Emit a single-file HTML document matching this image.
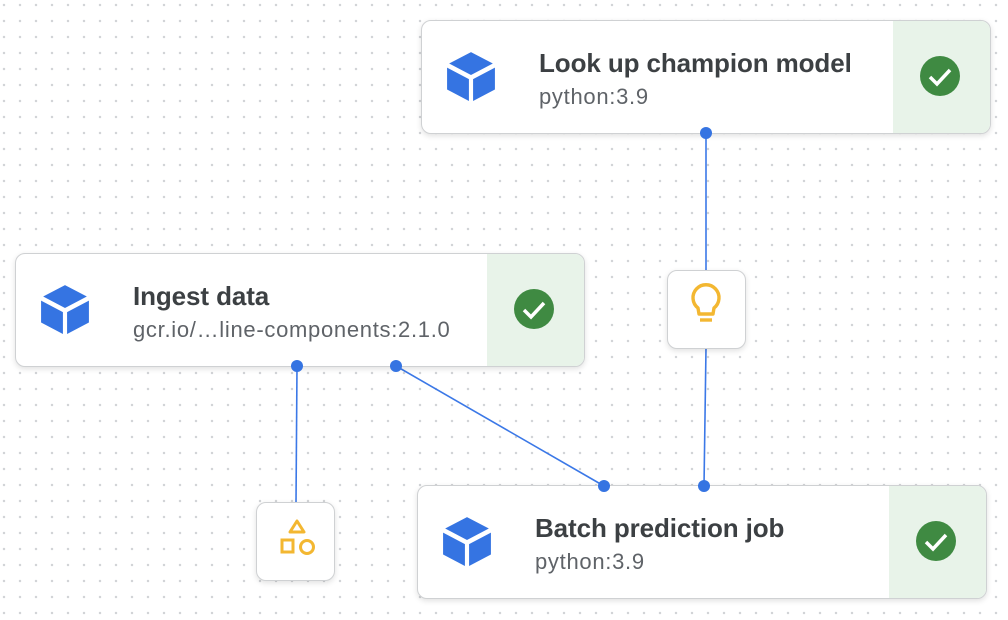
<!DOCTYPE html>
<html><head><style>
body{margin:0;width:1008px;height:620px;overflow:hidden;background:#fff;font-family:"Liberation Sans",Roboto,sans-serif;
background-image:radial-gradient(circle,#d2d4d7 1.1px,transparent 1.4px);background-size:16px 16px;background-position:-4px -3px;position:relative}
.card{position:absolute;width:570px;height:114px;background:#fff;border:1.5px solid #cfd1d3;border-radius:10px;box-shadow:0 2px 6px rgba(0,0,0,.12);overflow:hidden;box-sizing:border-box}
.card .g{position:absolute;right:0;top:0;bottom:0;width:97px;background:#e8f3e9}
.card .g svg{position:absolute;left:27px;top:35px}
.card .cube{position:absolute;left:24px;top:29px}
.card .t{position:absolute;left:117px;top:27px;font-size:26px;font-weight:bold;color:#3c4043;letter-spacing:-.1px}
.card .s{position:absolute;left:117px;top:63px;font-size:22px;color:#5f6368;letter-spacing:.7px}
.box{position:absolute;width:79px;height:79px;background:#fff;border:1.5px solid #cfd1d3;border-radius:10px;box-shadow:0 2px 6px rgba(0,0,0,.12);box-sizing:border-box}
svg.lines{position:absolute;left:0;top:0}
</style></head><body>
<svg class="lines" width="1008" height="620">
<g stroke="#3b78e7" stroke-width="1.6" fill="none">
<line x1="706" y1="133" x2="706" y2="272"/><line x1="706" y1="348" x2="704" y2="486"/>
<line x1="297" y1="366" x2="296" y2="503"/><line x1="396" y1="366" x2="604" y2="486"/>
</g></svg>
<div class="card" style="left:421px;top:20px;">
<svg class="cube" width="50" height="52" viewBox="0 0 48 50"><path d="M24 2 L45 13 L24 24 L3 13Z M1 17 L22 28 L22 49 L1 38Z M26 28 L47 17 L47 38 L26 49Z" fill="#3574e2"/></svg>
<div class="t">Look up champion model</div><div class="s">python:3.9</div>
<div class="g"><svg width="40" height="40"><circle cx="20" cy="20" r="20" fill="#3f8a42"/><path d="M10 21 L17 28 L30 14" stroke="#fff" stroke-width="3.5" fill="none"/></svg></div></div>
<div class="card" style="left:15px;top:253px;">
<svg class="cube" width="50" height="52" viewBox="0 0 48 50"><path d="M24 2 L45 13 L24 24 L3 13Z M1 17 L22 28 L22 49 L1 38Z M26 28 L47 17 L47 38 L26 49Z" fill="#3574e2"/></svg>
<div class="t">Ingest data</div><div class="s">gcr.io/…line-components:2.1.0</div>
<div class="g"><svg width="40" height="40"><circle cx="20" cy="20" r="20" fill="#3f8a42"/><path d="M10 21 L17 28 L30 14" stroke="#fff" stroke-width="3.5" fill="none"/></svg></div></div>
<div class="card" style="left:417px;top:485px;">
<svg class="cube" width="50" height="52" viewBox="0 0 48 50"><path d="M24 2 L45 13 L24 24 L3 13Z M1 17 L22 28 L22 49 L1 38Z M26 28 L47 17 L47 38 L26 49Z" fill="#3574e2"/></svg>
<div class="t">Batch prediction job</div><div class="s">python:3.9</div>
<div class="g"><svg width="40" height="40"><circle cx="20" cy="20" r="20" fill="#3f8a42"/><path d="M10 21 L17 28 L30 14" stroke="#fff" stroke-width="3.5" fill="none"/></svg></div></div>
<div class="box" style="left:667px;top:270px;"><svg width="79" height="79" style="position:absolute;left:-1px;top:-1px"><path d="M31 38 A13 13 0 1 1 47 38 L46 44 L32 44Z" fill="none" stroke="#f3b731" stroke-width="3.4" stroke-linejoin="round"/><line x1="33" y1="50" x2="45" y2="50" stroke="#f3b731" stroke-width="3.4"/></svg></div>
<div class="box" style="left:256px;top:502px;"><svg width="79" height="79" style="position:absolute;left:-1px;top:-1px"><path d="M41 19 L48 30 L34 30Z" fill="none" stroke="#f3b731" stroke-width="3" stroke-linejoin="round"/><rect x="26" y="38" width="11" height="12" fill="none" stroke="#f3b731" stroke-width="3"/><circle cx="51" cy="45" r="6.5" fill="none" stroke="#f3b731" stroke-width="3"/></svg></div>
<svg class="lines" width="1008" height="620"><g fill="#3574e2"><circle cx="706" cy="133" r="6"/><circle cx="297" cy="366" r="6"/><circle cx="396" cy="366" r="6"/><circle cx="604" cy="486" r="6"/><circle cx="704" cy="486" r="6"/></g></svg>
</body></html>
